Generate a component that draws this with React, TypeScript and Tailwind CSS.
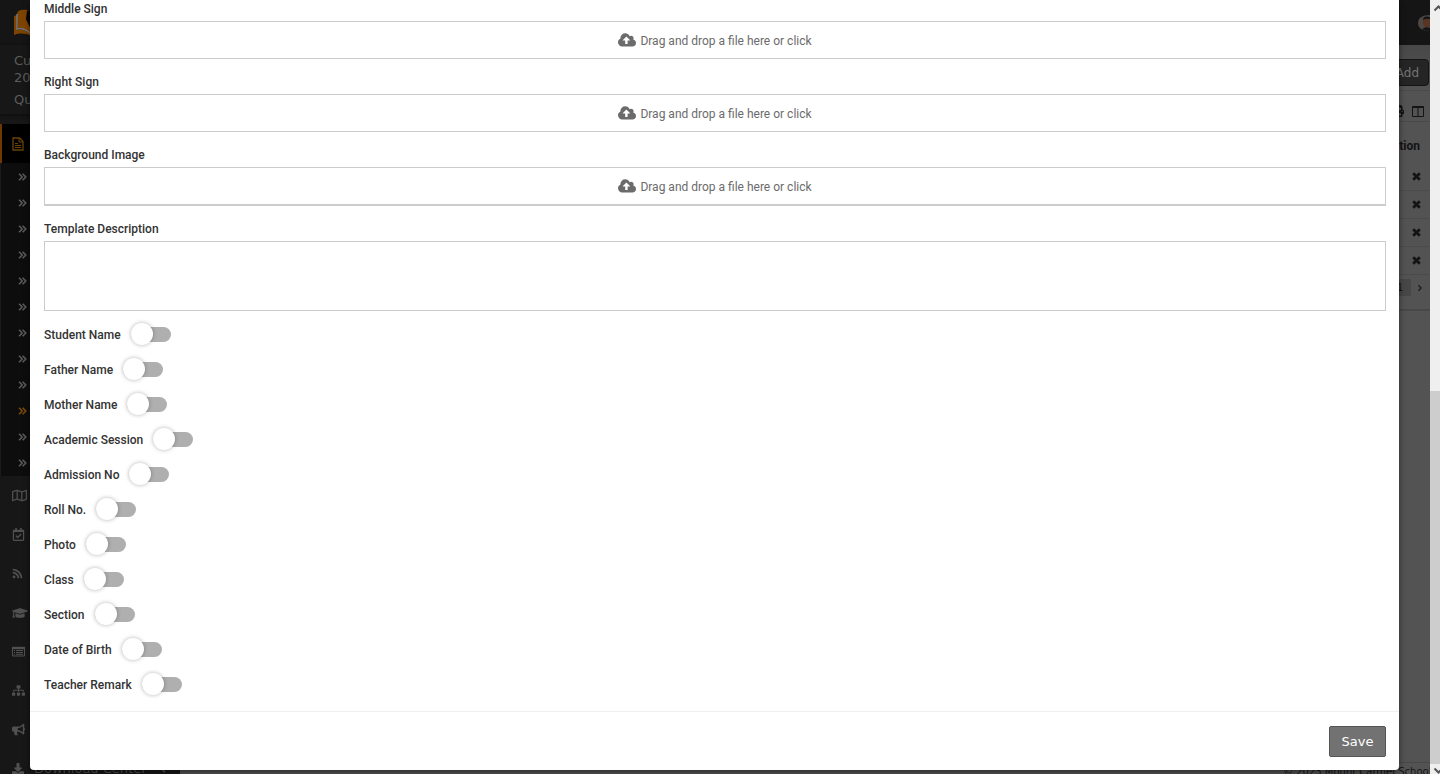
import { clsx } from 'clsx';
import type { ReactNode } from 'react';
import {
  FaAngleLeft,
  FaAngleRight,
  FaBullhorn,
  FaDownload,
  FaGraduationCap,
  FaPrint,
  FaRegCalendarCheck,
  FaRegMap,
  FaRss,
  FaSitemap,
} from 'react-icons/fa';

const UPLOADS = [
  { id: 'middle-sign', label: 'Middle Sign' },
  { id: 'right-sign', label: 'Right Sign' },
  { id: 'background-image', label: 'Background Image' },
];

const SWITCHES = [
  'Student Name',
  'Father Name',
  'Mother Name',
  'Academic Session',
  'Admission No',
  'Roll No.',
  'Photo',
  'Class',
  'Section',
  'Date of Birth',
  'Teacher Remark',
];

const MENU: { id: string; icon: ReactNode; label?: string }[] = [
  { id: 'map', icon: <FaRegMap size={15} /> },
  { id: 'attendance', icon: <FaRegCalendarCheck size={13} /> },
  { id: 'feed', icon: <FaRss size={11} /> },
  { id: 'academics', icon: <FaGraduationCap size={16} /> },
  { id: 'list', icon: <ListIcon /> },
  { id: 'hr', icon: <FaSitemap size={13} /> },
  { id: 'communicate', icon: <FaBullhorn size={13} /> },
  { id: 'download', icon: <FaDownload size={12} />, label: 'Download Center' },
];

const SUBMENU_COUNT = 12;
const ACTIVE_SUBMENU = 9;

function Logo() {
  return (
    <svg width="34" height="28" viewBox="0 0 34 28" aria-hidden="true">
      <path d="M0 7l3-1v15c5-1 9 0 14 4v2C11 24 6 24 0 26z" fill="#7d4300" />
      <path d="M3 4c1-3 5-4 10-3l3 3-4 6 4 8v6c-4-4-8-5-12-4z" fill="#7d4300" />
      <path d="M3 5v15c5-1 9 0 13 4" fill="none" stroke="#777" strokeWidth="1.5" />
      <path d="M13 2l17 2v20H17l-1-6-4-8z" fill="#050505" />
    </svg>
  );
}

function FileTextIcon() {
  return (
    <svg width="12" height="14" viewBox="0 0 12 14" fill="none" stroke="currentColor" aria-hidden="true">
      <path d="M1 1h6.5L11 4.500V13H1z" strokeWidth="1.300" />
      <path d="M7 1v4h4M3 6.500h3M3 8.500h6M3 10.500h6" />
    </svg>
  );
}

function ListIcon() {
  return (
    <svg width="13" height="11" viewBox="0 0 13 11" fill="none" stroke="currentColor" aria-hidden="true">
      <path d="M.5 1.500h12v8.500H.5z" />
      <path d="M0 2h13" strokeWidth="2.400" />
      <path d="M2 4.500h1M4 4.500h7M2 6.500h1M4 6.500h7M2 8.300h1M4 8.300h7" />
    </svg>
  );
}

function DoubleChevron() {
  return (
    <svg width="9" height="8" viewBox="0 0 9 8" fill="none" stroke="currentColor" strokeWidth="1.600" aria-hidden="true">
      <path d="M1 .8L4.200 4 1 7.200M4.600 .8L7.800 4 4.600 7.200" />
    </svg>
  );
}

function Cross() {
  return (
    <svg width="9" height="9" viewBox="0 0 9 9" stroke="currentColor" strokeWidth="2.800" className="inline-block" aria-hidden="true">
      <path d="M1.200 1.200l6.600 6.600M7.800 1.200L1.200 7.800" />
    </svg>
  );
}

function CloudUpload() {
  return (
    <svg width="18" height="17" viewBox="-64 0 1920 1792" fill="currentColor" aria-hidden="true">
      <path d="M1216 864q0-14-9-23l-352-352q-9-9-23-9t-23 9l-351 351q-10 12-10 24 0 14 9 23t23 9h224v352q0 13 9.500 22.500t22.500 9.500h192q13 0 22.500-9.500t9.500-22.500v-352h224q13 0 22.500-9.500t9.500-22.500zm640 288q0 159-112.500 271.500t-271.500 112.500h-1088q-185 0-316.500-131.500t-131.500-316.500q0-130 70-240t188-165q-2-30-2-43 0-212 150-362t362-150q156 0 285.500 87t188.500 231q71-62 166-62 106 0 181 75t75 181q0 76-41 138 130 31 213.500 135.500t83.500 238.500z" />
    </svg>
  );
}

function Sidebar() {
  return (
    <aside className="w-[180px] flex-shrink-0 bg-[#171717] text-[13px] text-[#5c5c5c]">
      <div className="h-[70px] border-b border-[#101010] pl-[14px] pt-[7px] shadow-[0_1px_3px_#0e0e0e]">
        <p className="leading-[17px]">Current Session:<br />2023-24</p>
        <p className="mt-[5px] leading-[18px]">Quick Links</p>
      </div>
      <div className="mt-[9px] flex h-[39px] items-center border-l-2 border-[#6e3800] bg-black pl-[10px] text-[#6b4208]">
        <FileTextIcon />
      </div>
      <ul className="border-l border-[#1b1b1b] bg-[#0d0d0d] pt-px">
        {Array.from({ length: SUBMENU_COUNT }, (_, i) => (
          <li
            key={i}
            className={clsx('flex h-[26px] items-center pl-[17px]', i === ACTIVE_SUBMENU ? 'text-[#7a4b08]' : 'text-[#5a5a5a]')}
          >
            <DoubleChevron />
          </li>
        ))}
      </ul>
      <ul>
        {MENU.map(({ id, icon, label }) => (
          <li key={id} className="flex h-[39px] items-center gap-[10px] pl-3 text-[#505050]">
            {icon}
            {label && <span className="whitespace-nowrap">{label}</span>}
            {label && <FaAngleLeft size={12} />}
          </li>
        ))}
      </ul>
    </aside>
  );
}

function ListPage() {
  return (
    <main className="flex min-w-0 flex-1 flex-col bg-[#535353] text-[#141414]">
      <div className="flex h-[45px] items-center justify-end bg-gradient-to-b from-[#484848] to-[#535353] pr-px pt-[10px]">
        <button type="button" className="h-[27px] w-[60px] rounded-sm border border-[#151515] bg-[#252525] pr-[9px] text-right text-[12px] text-[#757575]">
          Add
        </button>
      </div>
      <section className="border-b-2 border-[#484848]">
        <div className="flex h-8 items-center justify-end gap-2 border-y border-[#4a4a4a] pr-[6px] pt-[10px]">
          <FaPrint size={12} />
          <svg width="12" height="11" viewBox="0 0 12 11" fill="none" stroke="currentColor" aria-hidden="true">
            <path d="M.5.5h11v10H.5zM.5 1.500h11M6 1v9" />
          </svg>
        </div>
        <table className="w-full text-right text-[12px]">
          <thead>
            <tr className="h-10">
              <th className="pr-[10px] pt-2 font-['Roboto',sans-serif] font-bold">Action</th>
            </tr>
          </thead>
          <tbody>
            {[0, 1, 2, 3].map((row) => (
              <tr key={row} className="h-7 border-b border-[#4b4b4b]">
                <td className="pr-[9px]">
                  <Cross />
                </td>
              </tr>
            ))}
          </tbody>
        </table>
        <div className="flex h-[34px] items-center justify-end pb-2 pr-[5px] text-[10px]">
          <span className="mr-1 bg-[#474747] px-2 leading-[17px]">1</span>
          <FaAngleRight size={10} className="text-[#222]" />
        </div>
      </section>
      <footer className="mt-auto h-3 border-t border-[#484848]">
        <p className="ml-auto w-[147px] whitespace-nowrap text-[10px] leading-[18px]">© 2023 Mount Carmel School</p>
      </footer>
    </main>
  );
}

function FileDrop({ id, label, last }: { id: string; label: string; last: boolean }) {
  return (
    <div className="mb-[14px]">
      <label htmlFor={id} className="mb-[2px] block font-medium leading-[19px]">{label}</label>
      <div
        className={clsx(
          'relative flex items-center justify-center gap-1 border border-[#ccc] pt-px text-[#6b6b6b]',
          last ? 'h-[39px] border-b-2' : 'h-[38px]',
        )}
      >
        <CloudUpload />
        <span>Drag and drop a file here or click</span>
        <input id={id} type="file" className="absolute inset-0 h-full w-full cursor-pointer opacity-0" />
      </div>
    </div>
  );
}

function Switch({ label }: { label: string }) {
  return (
    <label className="flex h-[35px] w-fit cursor-pointer items-center gap-[10px] font-medium">
      {label}
      <input
        type="checkbox"
        className="relative h-[15px] w-10 appearance-none rounded-full bg-[#afafaf] before:absolute before:-top-1 before:left-0 before:h-[22px] before:w-[22px] before:rounded-full before:bg-white before:shadow-[0_0_4px_rgba(0,0,0,0.3)] checked:before:left-[18px]"
      />
    </label>
  );
}

function TemplateModal() {
  return (
    <form className="absolute bottom-1 left-[30px] right-[41px] top-0 flex flex-col rounded-b-sm bg-white font-['Roboto',sans-serif] text-[12px] text-[#333] shadow-[0_2px_6px_rgba(0,0,0,0.5)]">
      <div className="flex-1 pl-[14px] pr-[13px]">
        {UPLOADS.map((u, i) => (
          <FileDrop key={u.id} id={u.id} label={u.label} last={i === UPLOADS.length - 1} />
        ))}
        <label htmlFor="description" className="mb-[2px] block font-medium leading-[19px]">Template Description</label>
        <textarea id="description" className="mb-[6px] block h-[70px] w-full resize-none border border-[#ccc] outline-none" />
        {SWITCHES.map((label) => (
          <Switch key={label} label={label} />
        ))}
      </div>
      <div className="flex justify-end border-t border-[#f0f0f0] px-[13px] pb-[13px] pt-[14px]">
        <button type="button" className="h-[31px] w-[57px] rounded-xs border border-[#555] bg-[#727272] font-['DejaVu_Sans',sans-serif] text-[13px] text-white">
          Save
        </button>
      </div>
    </form>
  );
}

function Scrollbar() {
  return (
    <div className="absolute inset-y-0 right-0 flex w-[10px] flex-col overflow-hidden bg-[#efefef] text-[#555]" aria-hidden="true">
      <svg className="h-[18px] w-[10px] flex-shrink-0" viewBox="0 0 10 18" fill="none" stroke="currentColor" strokeWidth="2">
        <path d="M4.500 10.500L8.500 6.500l4 4" />
      </svg>
      <div className="flex-1" />
      <div className="flex-1 bg-[#cdcdcd]" />
      <svg className="h-[10px] w-[10px] flex-shrink-0" viewBox="0 0 10 10" fill="none" stroke="currentColor" strokeWidth="2">
        <path d="M4.500 4.500l4 4 4-4" />
      </svg>
    </div>
  );
}

export default function App() {
  return (
    <div className="relative flex h-screen flex-col overflow-hidden bg-[#171717] pr-[10px] font-['DejaVu_Sans',sans-serif]">
      <header className="flex h-[45px] flex-shrink-0 items-center justify-between bg-[#151515] pl-[14px]">
        <Logo />
        <svg width="12" height="16" viewBox="0 0 12 16" aria-hidden="true">
          <path d="M12 0C4 0 0 3 0 8s4 8 12 8z" fill="#4b4846" />
          <path d="M5 3c2-2 6-1 7 0v9c-4 1-6-1-7-3z" fill="#5a3526" />
          <path d="M5 5c0-4 4-4 7-3v2H7zM4 14l4-2 4 1v3c-4 0-6-1-8-2z" fill="#151515" />
        </svg>
      </header>
      <div className="flex min-h-0 flex-1">
        <Sidebar />
        <ListPage />
      </div>
      <TemplateModal />
      <Scrollbar />
    </div>
  );
}
